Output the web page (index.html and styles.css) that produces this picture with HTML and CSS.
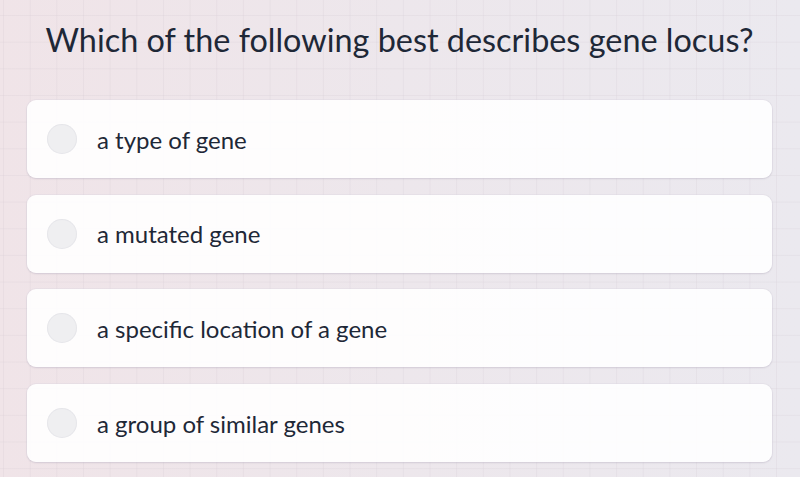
FILE: index.html
```html
<!DOCTYPE html>
<html>
<head>
<meta charset="utf-8">
<link rel="stylesheet" href="styles.css">
</head>
<body>
<div class="page">
  <h1 class="question">Which of the following best describes gene locus?</h1>
  <div class="options">
    <div class="option"><span class="radio"></span><span class="label">a type of gene</span></div>
    <div class="option"><span class="radio"></span><span class="label">a mutated gene</span></div>
    <div class="option"><span class="radio"></span><span class="label">a specific location of a gene</span></div>
    <div class="option"><span class="radio"></span><span class="label">a group of similar genes</span></div>
  </div>
</div>
</body>
</html>
```

FILE: styles.css
```css
html, body {
  margin: 0;
  padding: 0;
  height: 100%;
}
body {
  font-family: Lato, "Open Sans", sans-serif;
  color: #1e2837;
  background-color: #ede8ec;
  background-image:
    linear-gradient(rgba(200, 190, 200, 0.18) 1px, transparent 1px),
    linear-gradient(90deg, rgba(200, 190, 200, 0.18) 1px, transparent 1px),
    linear-gradient(90deg, #f0e4e8 0%, #ede7ec 50%, #ebe9ef 100%);
  background-size: 26.667px 26.667px, 26.667px 26.667px, 100% 100%;
  background-position: 0 15px, 3px 0, 0 0;
  overflow: hidden;
}
.page {
  padding: 20px 28px 0 27px;
}
.question {
  margin: 0;
  font-size: 32.4px;
  line-height: 40px;
  font-weight: 400;
  text-align: center;
  color: #1e2837;
  white-space: nowrap;
}
.options {
  margin-top: 40px;
  display: flex;
  flex-direction: column;
  gap: 16.7px;
}
.option {
  height: 78px;
  box-sizing: border-box;
  display: flex;
  align-items: center;
  padding-left: 20px;
  background: rgba(255, 255, 255, 0.9);
  border-radius: 9px;
  box-shadow: 0 1px 2px rgba(60, 50, 80, 0.12), 0 0 0 1px rgba(220, 215, 225, 0.35);
}
.radio {
  width: 30px;
  height: 30px;
  border-radius: 50%;
  background: #efeff1;
  box-shadow: inset 0 0 0 1px rgba(225, 225, 230, 0.6);
  flex-shrink: 0;
}
.label {
  margin-left: 20px;
  font-size: 24px;
  color: #1e2837;
}
```
